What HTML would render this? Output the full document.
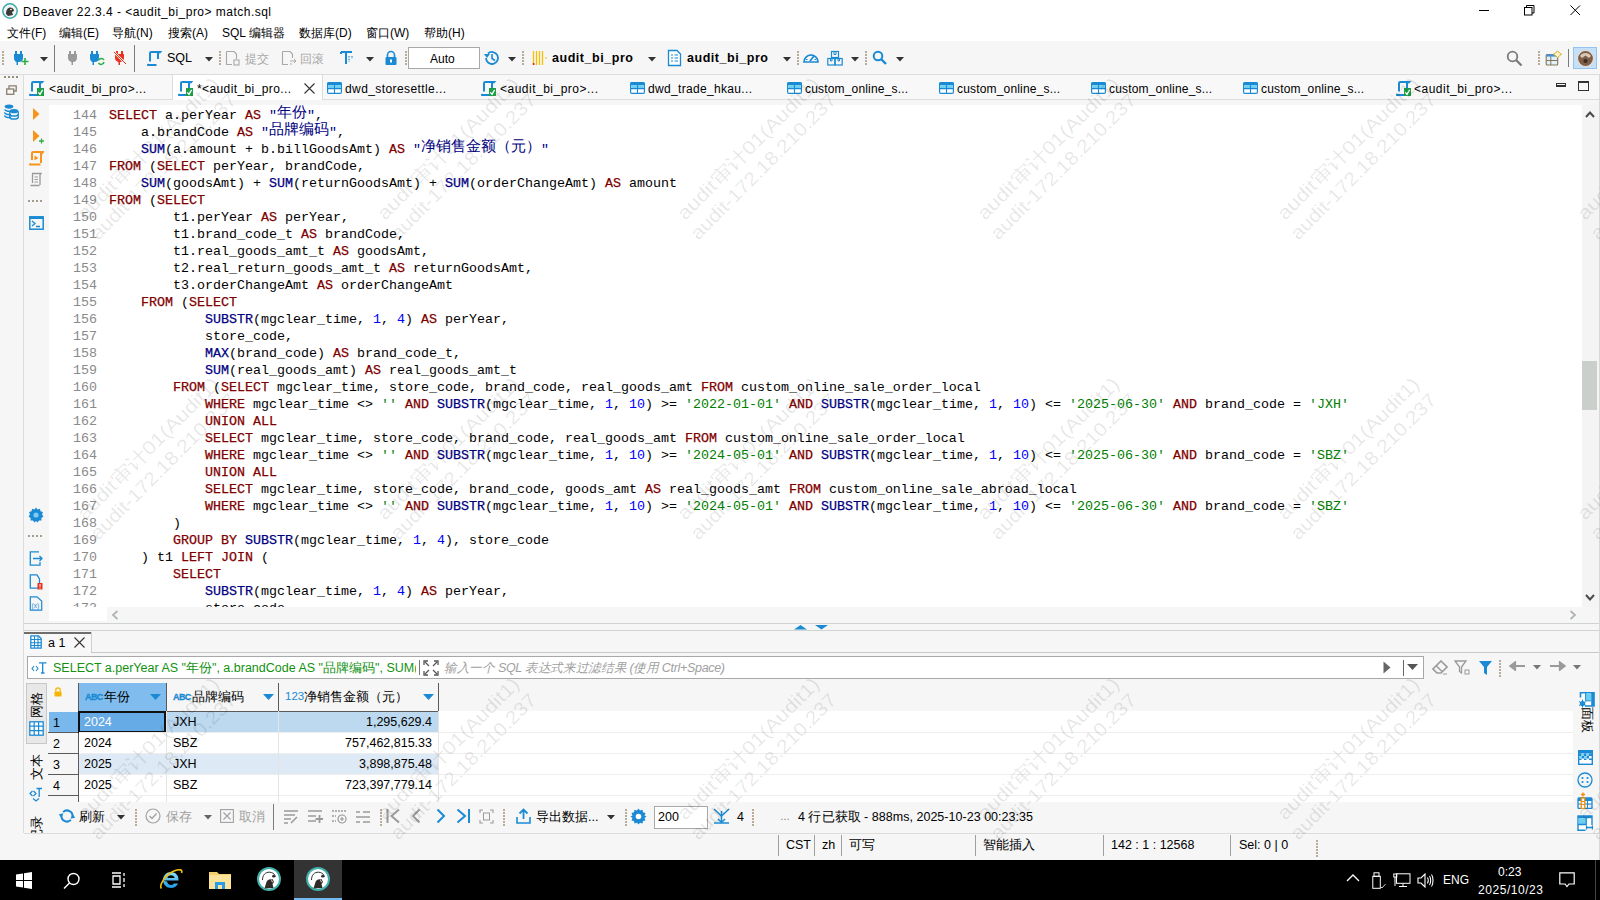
<!DOCTYPE html><html><head><meta charset="utf-8"><style>*{margin:0;padding:0;box-sizing:border-box}
html,body{width:1600px;height:900px;overflow:hidden;background:#f6f6f6;font-family:"Liberation Sans",sans-serif;font-size:12px;color:#000;position:relative}
.a{position:absolute}
.t{white-space:pre;line-height:1}
.vt{writing-mode:vertical-rl;text-orientation:sideways;transform:rotate(180deg);line-height:19px}
i{font-style:normal}
.ln{position:absolute;left:0;width:48px;text-align:right;height:17px;line-height:17px;font-family:"Liberation Mono",monospace;font-size:13.33px;color:#8a8a8a}
.cl{position:absolute;left:60px;white-space:pre;height:17px;line-height:17px;font-family:"Liberation Mono",monospace;font-size:13.33px;color:#000}
.k{color:#800000;-webkit-text-stroke:0.25px #800000}
.f{color:#000080;-webkit-text-stroke:0.25px #000080}
.s{color:#008000}
.q{color:#000080}
.n{color:#0000ff}
.vt2{writing-mode:vertical-rl;text-orientation:sideways;line-height:19px}
.cj{font-family:"Liberation Sans",sans-serif;font-size:15px;position:relative;top:-2px;line-height:0}
</style></head><body><div class="a" style="left:0px;top:0px;width:1600px;height:41px;background:#fff"></div>
<svg class="a" style="left:2px;top:3px;" width="16" height="16" viewBox="0 0 16 16"><circle cx="8" cy="8" r="7.2" fill="#f4f4f4" stroke="#3aa9a6" stroke-width="1.5"/><path d="M4 11C4 8 5 5 8 4.5C10.5 4.5 12 6 12 8L10 9L11 12L6 13Z" fill="#3a3a3a"/><circle cx="9" cy="6.5" r="0.8" fill="#fff"/></svg>
<div class="a t" style="left:23px;top:5.84px;font-size:12px;color:#000;font-weight:normal;;letter-spacing:0.480px">DBeaver 22.3.4 - &lt;audit_bi_pro&gt; match.sql</div>
<div class="a" style="left:1479px;top:10px;width:10px;height:1px;background:#000"></div>
<svg class="a" style="left:1524px;top:5px;" width="12" height="12" viewBox="0 0 12 12"><rect x="0.5" y="2.5" width="7.5" height="7.5" fill="none" stroke="#000"/><path d="M2.5 2.5V0.5H10V8H8" fill="none" stroke="#000"/></svg>
<svg class="a" style="left:1570px;top:5px;" width="12" height="12" viewBox="0 0 12 12"><path d="M0.5 0.5L10 10M10 0.5L0.5 10" stroke="#000" stroke-width="1"/></svg>
<div class="a t" style="left:7px;top:26.84px;font-size:12px;color:#000;font-weight:normal;">文件(F)</div>
<div class="a t" style="left:59px;top:26.84px;font-size:12px;color:#000;font-weight:normal;">编辑(E)</div>
<div class="a t" style="left:112px;top:26.84px;font-size:12px;color:#000;font-weight:normal;">导航(N)</div>
<div class="a t" style="left:168px;top:26.84px;font-size:12px;color:#000;font-weight:normal;">搜索(A)</div>
<div class="a t" style="left:222px;top:26.84px;font-size:12px;color:#000;font-weight:normal;">SQL 编辑器</div>
<div class="a t" style="left:299px;top:26.84px;font-size:12px;color:#000;font-weight:normal;">数据库(D)</div>
<div class="a t" style="left:366px;top:26.84px;font-size:12px;color:#000;font-weight:normal;">窗口(W)</div>
<div class="a t" style="left:424px;top:26.84px;font-size:12px;color:#000;font-weight:normal;">帮助(H)</div>
<div class="a" style="left:0px;top:41px;width:1600px;height:33px;background:#f6f6f6"></div>
<div class="a" style="left:2px;top:51px;width:2px;height:2px;background:#b8ad98"></div>
<div class="a" style="left:2px;top:54px;width:2px;height:2px;background:#b8ad98"></div>
<div class="a" style="left:2px;top:57px;width:2px;height:2px;background:#b8ad98"></div>
<div class="a" style="left:2px;top:60px;width:2px;height:2px;background:#b8ad98"></div>
<div class="a" style="left:2px;top:63px;width:2px;height:2px;background:#b8ad98"></div>
<svg class="a" style="left:13px;top:50px;" width="17" height="16" viewBox="0 0 17 16"><path d="M3 1V4M8 1V4" stroke="#1a8ad4" stroke-width="2"/><path d="M1 4H10V8C10 10.5 8 12 6 12H5V15H3.5V12C2 11.5 1 10 1 8Z" fill="#1a8ad4"/><path d="M12 8V15M8.5 11.5H15.5" stroke="#2cae46" stroke-width="1.6"/></svg>
<svg class="a" style="left:40px;top:57px;" width="8" height="5" viewBox="0 0 8 5"><path d="M0 0H8L4 4.5Z" fill="#333"/></svg>
<div class="a" style="left:54px;top:45px;width:1px;height:27px;background:#7a7a7a"></div>
<svg class="a" style="left:67px;top:50px;" width="12" height="15" viewBox="0 0 12 15"><path d="M3 1V4M8 1V4" stroke="#9a9a9a" stroke-width="2"/><path d="M1 4H10V8C10 10.5 8 12 6.5 12H6V15H4.5V12C2.5 11.5 1 10 1 8Z" fill="#9a9a9a"/></svg>
<svg class="a" style="left:89px;top:50px;" width="17" height="16" viewBox="0 0 17 16"><path d="M3 1V4M8 1V4" stroke="#1a8ad4" stroke-width="2"/><path d="M1 4H10V8C10 10.5 8 12 6 12H5V15H3.5V12C2 11.5 1 10 1 8Z" fill="#1a8ad4"/><path d="M9.5 10.5A3 3 0 0 1 15 10M15 12A3 3 0 0 1 9.5 13" fill="none" stroke="#2cae46" stroke-width="1.5"/></svg>
<svg class="a" style="left:113px;top:50px;" width="14" height="16" viewBox="0 0 14 16"><path d="M4 1V4M9 1V4" stroke="#e8321e" stroke-width="2"/><path d="M2 4H11V8C11 10.5 9 12 7.5 12H7V15H5.5V12C3.5 11.5 2 10 2 8Z" fill="#e8321e"/><path d="M1 2L13 14" stroke="#f6f6f6" stroke-width="2.2"/><path d="M1 2L13 14" stroke="#e8321e" stroke-width="1"/></svg>
<div class="a" style="left:134px;top:45px;width:1px;height:27px;background:#7a7a7a"></div>
<svg class="a" style="left:147px;top:50px;" width="17" height="17" viewBox="0 0 17 17"><path d="M3 11.5V3.2Q3 2 4.2 2H13.2L12.2 3.2" fill="none" stroke="#1a8ad4" stroke-width="2"/><path d="M11 2.5V9" fill="none" stroke="#1a8ad4" stroke-width="2"/><path d="M0.3 14L1 15H9.5" fill="none" stroke="#1a8ad4" stroke-width="2"/></svg>
<div class="a t" style="left:167px;top:52.42px;font-size:12.5px;color:#000;font-weight:normal;">SQL</div>
<svg class="a" style="left:205px;top:57px;" width="8" height="5" viewBox="0 0 8 5"><path d="M0 0H8L4 4.5Z" fill="#333"/></svg>
<div class="a" style="left:219px;top:51px;width:2px;height:2px;background:#b8ad98"></div>
<div class="a" style="left:219px;top:54px;width:2px;height:2px;background:#b8ad98"></div>
<div class="a" style="left:219px;top:57px;width:2px;height:2px;background:#b8ad98"></div>
<div class="a" style="left:219px;top:60px;width:2px;height:2px;background:#b8ad98"></div>
<div class="a" style="left:219px;top:63px;width:2px;height:2px;background:#b8ad98"></div>
<svg class="a" style="left:225px;top:50px;" width="16" height="16" viewBox="0 0 16 16"><path d="M1.5 1.5H9L11.5 4V9M7 14.5H1.5V1.5" fill="none" stroke="#a8a8a8" stroke-width="1.1"/><rect x="9" y="10" width="5" height="5" fill="none" stroke="#a8a8a8" stroke-width="1.1"/></svg>
<div class="a t" style="left:245px;top:52.84px;font-size:12px;color:#a8a8a8;font-weight:normal;">提交</div>
<svg class="a" style="left:281px;top:50px;" width="16" height="16" viewBox="0 0 16 16"><path d="M1.5 1.5H9L11.5 4V8M7 14.5H1.5V1.5" fill="none" stroke="#a8a8a8" stroke-width="1.1"/><path d="M9 11H15M13 9L15 11L13 13M11 14H9" fill="none" stroke="#a8a8a8" stroke-width="1"/></svg>
<div class="a t" style="left:300px;top:52.84px;font-size:12px;color:#a8a8a8;font-weight:normal;">回滚</div>
<svg class="a" style="left:340px;top:50px;" width="16" height="16" viewBox="0 0 16 16"><path d="M1 2H12M6 2V14M1 2V4" stroke="#1a8ad4" stroke-width="2"/><path d="M9 6V12M12 6V9" stroke="#1a8ad4" stroke-width="1.2" stroke-dasharray="1.5 1.2"/></svg>
<svg class="a" style="left:366px;top:57px;" width="8" height="5" viewBox="0 0 8 5"><path d="M0 0H8L4 4.5Z" fill="#333"/></svg>
<svg class="a" style="left:384px;top:50px;" width="14" height="16" viewBox="0 0 14 16"><path d="M3.5 7V5A3.5 3.5 0 0 1 10.5 5V7" fill="none" stroke="#1a8ad4" stroke-width="1.6"/><rect x="1.5" y="7" width="11" height="8" rx="1" fill="#1a8ad4"/><rect x="6" y="9.5" width="2" height="3" fill="#fff"/></svg>
<div class="a" style="left:405px;top:51px;width:2px;height:2px;background:#b8ad98"></div>
<div class="a" style="left:405px;top:54px;width:2px;height:2px;background:#b8ad98"></div>
<div class="a" style="left:405px;top:57px;width:2px;height:2px;background:#b8ad98"></div>
<div class="a" style="left:405px;top:60px;width:2px;height:2px;background:#b8ad98"></div>
<div class="a" style="left:405px;top:63px;width:2px;height:2px;background:#b8ad98"></div>
<div class="a" style="left:408px;top:47px;width:72px;height:22px;background:#fff;border:1px solid #a8a8a8"></div>
<div class="a t" style="left:430px;top:52.84px;font-size:12px;color:#000;font-weight:normal;">Auto</div>
<svg class="a" style="left:483px;top:49px;" width="18" height="18" viewBox="0 0 18 18"><path d="M3 9A6 6 0 1 0 5 4.5" fill="none" stroke="#1a8ad4" stroke-width="1.8"/><path d="M1 5L4 9L7 5Z" fill="#1a8ad4"/><path d="M9 5V9.5L12 11.5" fill="none" stroke="#1a8ad4" stroke-width="1.6"/></svg>
<svg class="a" style="left:508px;top:57px;" width="8" height="5" viewBox="0 0 8 5"><path d="M0 0H8L4 4.5Z" fill="#333"/></svg>
<div class="a" style="left:522px;top:51px;width:2px;height:2px;background:#b8ad98"></div>
<div class="a" style="left:522px;top:54px;width:2px;height:2px;background:#b8ad98"></div>
<div class="a" style="left:522px;top:57px;width:2px;height:2px;background:#b8ad98"></div>
<div class="a" style="left:522px;top:60px;width:2px;height:2px;background:#b8ad98"></div>
<div class="a" style="left:522px;top:63px;width:2px;height:2px;background:#b8ad98"></div>
<svg class="a" style="left:532px;top:50px;" width="16" height="16" viewBox="0 0 16 16"><path d="M1.5 1V15M4.5 1V15M7.5 1V15M10.5 1V15" stroke="#f6c000" stroke-width="1.3"/><rect x="0.8" y="13" width="1.6" height="2" fill="#e02020"/><path d="M13 8H15" stroke="#f6c000" stroke-width="1.2"/></svg>
<div class="a t" style="left:552px;top:52.42px;font-size:12.5px;color:#000;font-weight:bold;;letter-spacing:0.544px">audit_bi_pro</div>
<svg class="a" style="left:648px;top:57px;" width="8" height="5" viewBox="0 0 8 5"><path d="M0 0H8L4 4.5Z" fill="#333"/></svg>
<svg class="a" style="left:667px;top:49px;" width="15" height="18" viewBox="0 0 15 18"><path d="M1.5 1.5H10L13.5 5V16.5H1.5Z" fill="#fff" stroke="#1a8ad4" stroke-width="1.3"/><path d="M4 6H6M7.5 6H11M4 9H6M7.5 9H11M4 12H6M7.5 12H11" stroke="#1a8ad4" stroke-width="1.2"/></svg>
<div class="a t" style="left:687px;top:52.42px;font-size:12.5px;color:#000;font-weight:bold;;letter-spacing:0.544px">audit_bi_pro</div>
<svg class="a" style="left:783px;top:57px;" width="8" height="5" viewBox="0 0 8 5"><path d="M0 0H8L4 4.5Z" fill="#333"/></svg>
<div class="a" style="left:797px;top:51px;width:2px;height:2px;background:#b8ad98"></div>
<div class="a" style="left:797px;top:54px;width:2px;height:2px;background:#b8ad98"></div>
<div class="a" style="left:797px;top:57px;width:2px;height:2px;background:#b8ad98"></div>
<div class="a" style="left:797px;top:60px;width:2px;height:2px;background:#b8ad98"></div>
<div class="a" style="left:797px;top:63px;width:2px;height:2px;background:#b8ad98"></div>
<svg class="a" style="left:802px;top:50px;" width="18" height="16" viewBox="0 0 18 16"><path d="M2 12A7 7 0 1 1 16 12Z" fill="none" stroke="#1a8ad4" stroke-width="1.7"/><path d="M8 11L12 6" stroke="#1a8ad4" stroke-width="1.8"/><path d="M4 9.5H5.5M12.5 9.5H14M9 4.5V6" stroke="#1a8ad4" stroke-width="1.2"/></svg>
<svg class="a" style="left:827px;top:50px;" width="16" height="16" viewBox="0 0 16 16"><rect x="4.5" y="1.5" width="7" height="6" fill="none" stroke="#1a8ad4" stroke-width="1.2"/><rect x="0.8" y="8.5" width="7" height="6.5" fill="none" stroke="#1a8ad4" stroke-width="1.2"/><rect x="8.2" y="8.5" width="7" height="6.5" fill="none" stroke="#1a8ad4" stroke-width="1.2"/><path d="M7 1.5V4.5H9V1.5M3.5 8.5V11H5V8.5M11 8.5V11H12.5V8.5" fill="none" stroke="#1a8ad4"/></svg>
<svg class="a" style="left:851px;top:57px;" width="8" height="5" viewBox="0 0 8 5"><path d="M0 0H8L4 4.5Z" fill="#333"/></svg>
<div class="a" style="left:865px;top:51px;width:2px;height:2px;background:#b8ad98"></div>
<div class="a" style="left:865px;top:54px;width:2px;height:2px;background:#b8ad98"></div>
<div class="a" style="left:865px;top:57px;width:2px;height:2px;background:#b8ad98"></div>
<div class="a" style="left:865px;top:60px;width:2px;height:2px;background:#b8ad98"></div>
<div class="a" style="left:865px;top:63px;width:2px;height:2px;background:#b8ad98"></div>
<svg class="a" style="left:872px;top:50px;" width="16" height="16" viewBox="0 0 16 16"><circle cx="6" cy="6" r="4.3" fill="none" stroke="#1a8ad4" stroke-width="2"/><path d="M9 9L14 14" stroke="#1a8ad4" stroke-width="2.4"/></svg>
<svg class="a" style="left:896px;top:57px;" width="8" height="5" viewBox="0 0 8 5"><path d="M0 0H8L4 4.5Z" fill="#333"/></svg>
<svg class="a" style="left:1506px;top:50px;" width="18" height="18" viewBox="0 0 18 18"><circle cx="6.5" cy="6.5" r="4.8" fill="none" stroke="#7a7a7a" stroke-width="1.8"/><path d="M10 10L15.5 15.5" stroke="#7a7a7a" stroke-width="2.3"/></svg>
<div class="a" style="left:1538px;top:51px;width:2px;height:2px;background:#b8ad98"></div>
<div class="a" style="left:1538px;top:54px;width:2px;height:2px;background:#b8ad98"></div>
<div class="a" style="left:1538px;top:57px;width:2px;height:2px;background:#b8ad98"></div>
<div class="a" style="left:1538px;top:60px;width:2px;height:2px;background:#b8ad98"></div>
<div class="a" style="left:1538px;top:63px;width:2px;height:2px;background:#b8ad98"></div>
<svg class="a" style="left:1545px;top:50px;" width="17" height="16" viewBox="0 0 17 16"><rect x="1.2" y="4.5" width="11.5" height="10.5" rx="1" fill="#dff1fb" stroke="#857556" stroke-width="1.1"/><rect x="1.2" y="4.3" width="10" height="2.3" fill="#4a90d9"/><path d="M1.2 10.5H12.7M5.8 6.5V15" stroke="#857556" stroke-width="1"/><path d="M12.5 0.8L14.5 3L16.5 4.3L14.5 5.6L12.5 7.8L10.5 5.6L8.5 4.3L10.5 3Z" fill="#fff6c8" stroke="#d7aa20" stroke-width="1"/></svg>
<div class="a" style="left:1568px;top:49px;width:1px;height:18px;background:#7a7a7a"></div>
<div class="a" style="left:1573px;top:47px;width:24px;height:22px;background:#c6e0f8;border:1px solid #94c2ee"></div>
<svg class="a" style="left:1576px;top:49px;" width="19" height="19" viewBox="0 0 19 19"><circle cx="9.5" cy="9.5" r="8" fill="#7b5d48"/><circle cx="9.5" cy="9.5" r="8" fill="none" stroke="#e7e0da" stroke-width="1.2"/><path d="M4 7C6 3 13 3 15 7L13 9L9.5 6.5L6 9Z" fill="#d9c8b8"/><circle cx="9.5" cy="12" r="2" fill="#3b2a20"/></svg>
<div class="a" style="left:0px;top:74px;width:1600px;height:1px;background:#dcdcdc"></div>
<div class="a" style="left:0px;top:75px;width:23px;height:785px;background:#f6f6f6"></div>
<div class="a" style="left:23px;top:75px;width:1px;height:758px;background:#dcdcdc"></div>
<div class="a" style="left:24px;top:75px;width:1576px;height:25px;background:#f8f8f8"></div>
<div class="a" style="left:24px;top:99px;width:1576px;height:1px;background:#dcdcdc"></div>
<div class="a" style="left:173px;top:75px;width:149px;height:30px;background:#fff"></div>
<div class="a" style="left:172px;top:75px;width:1px;height:25px;background:#dcdcdc"></div>
<div class="a" style="left:322px;top:75px;width:1px;height:25px;background:#dcdcdc"></div>
<div class="a" style="left:4px;top:76px;width:2px;height:2px;background:#998e7a"></div>
<div class="a" style="left:8px;top:76px;width:2px;height:2px;background:#998e7a"></div>
<div class="a" style="left:12px;top:76px;width:2px;height:2px;background:#998e7a"></div>
<div class="a" style="left:16px;top:76px;width:2px;height:2px;background:#998e7a"></div>
<svg class="a" style="left:6px;top:85px;" width="11" height="10" viewBox="0 0 11 10"><rect x="0.7" y="4" width="7" height="5.3" fill="none" stroke="#8a7f70" stroke-width="1.3"/><path d="M3 4V0.8H10.2V6H7.7" fill="none" stroke="#8a7f70" stroke-width="1.3"/></svg>
<svg class="a" style="left:4px;top:104px;" width="15" height="16" viewBox="0 0 15 16"><ellipse cx="5" cy="2.6" rx="4.3" ry="2.1" fill="#1a8ad4"/><path d="M0.7 5.3A4.3 2.1 0 0 0 7 7M0.7 8.3A4.3 2.1 0 0 0 7 10.3M0.7 11.3A4.3 2.1 0 0 0 7 13.3" fill="none" stroke="#1a8ad4" stroke-width="1.5"/><ellipse cx="10" cy="7.2" rx="4.3" ry="2.1" fill="#1a8ad4"/><path d="M5.7 10A4.3 2.1 0 0 0 14.3 10M5.7 13A4.3 2.1 0 0 0 14.3 13" fill="none" stroke="#1a8ad4" stroke-width="1.5"/><path d="M5.7 7.2V13M14.3 7.2V13" stroke="#1a8ad4" stroke-width="1.2"/></svg>
<svg class="a" style="left:29px;top:80px;" width="17" height="17" viewBox="0 0 17 17"><path d="M3 11.5V3.2Q3 2 4.2 2H13.2L12.2 3.2" fill="none" stroke="#1a8ad4" stroke-width="2"/><path d="M11 2.5V9" fill="none" stroke="#1a8ad4" stroke-width="2"/><path d="M0.3 14L1 15H9.5" fill="none" stroke="#1a8ad4" stroke-width="2"/><rect x="8" y="8" width="7" height="8" fill="#1f9e48"/><path d="M9.3 12.3L11 14.3L13.6 9.8" fill="none" stroke="#fff" stroke-width="1.3"/></svg>
<div class="a t" style="left:49px;top:82.84px;font-size:12px;color:#000;font-weight:normal;;letter-spacing:0.433px">&lt;audit_bi_pro&gt;...</div>
<svg class="a" style="left:178px;top:80px;" width="17" height="17" viewBox="0 0 17 17"><path d="M3 11.5V3.2Q3 2 4.2 2H13.2L12.2 3.2" fill="none" stroke="#1a8ad4" stroke-width="2"/><path d="M11 2.5V9" fill="none" stroke="#1a8ad4" stroke-width="2"/><path d="M0.3 14L1 15H9.5" fill="none" stroke="#1a8ad4" stroke-width="2"/><rect x="8" y="8" width="7" height="8" fill="#1f9e48"/><path d="M9.3 12.3L11 14.3L13.6 9.8" fill="none" stroke="#fff" stroke-width="1.3"/></svg>
<div class="a t" style="left:197px;top:82.84px;font-size:12px;color:#000;font-weight:normal;;letter-spacing:0.392px">*&lt;audit_bi_pro...</div>
<svg class="a" style="left:327px;top:82px;" width="15" height="12" viewBox="0 0 15 12"><rect x="0.6" y="0.6" width="13.8" height="10.8" rx="1.2" fill="#fff" stroke="#1a8ad4" stroke-width="1.2"/><rect x="0.5" y="0.5" width="14" height="2.8" fill="#1a8ad4"/><rect x="1.2" y="3.3" width="12.6" height="2.7" fill="#6ccff0"/><path d="M0.5 6.6H14.5M7.5 3V11" stroke="#1a8ad4" stroke-width="1.1"/></svg>
<div class="a t" style="left:345px;top:82.84px;font-size:12px;color:#000;font-weight:normal;;letter-spacing:0.408px">dwd_storesettle...</div>
<svg class="a" style="left:481px;top:80px;" width="17" height="17" viewBox="0 0 17 17"><path d="M3 11.5V3.2Q3 2 4.2 2H13.2L12.2 3.2" fill="none" stroke="#1a8ad4" stroke-width="2"/><path d="M11 2.5V9" fill="none" stroke="#1a8ad4" stroke-width="2"/><path d="M0.3 14L1 15H9.5" fill="none" stroke="#1a8ad4" stroke-width="2"/><rect x="8" y="8" width="7" height="8" fill="#1f9e48"/><path d="M9.3 12.3L11 14.3L13.6 9.8" fill="none" stroke="#fff" stroke-width="1.3"/></svg>
<div class="a t" style="left:500px;top:82.84px;font-size:12px;color:#000;font-weight:normal;;letter-spacing:0.495px">&lt;audit_bi_pro&gt;...</div>
<svg class="a" style="left:630px;top:82px;" width="15" height="12" viewBox="0 0 15 12"><rect x="0.6" y="0.6" width="13.8" height="10.8" rx="1.2" fill="#fff" stroke="#1a8ad4" stroke-width="1.2"/><rect x="0.5" y="0.5" width="14" height="2.8" fill="#1a8ad4"/><rect x="1.2" y="3.3" width="12.6" height="2.7" fill="#6ccff0"/><path d="M0.5 6.6H14.5M7.5 3V11" stroke="#1a8ad4" stroke-width="1.1"/></svg>
<div class="a t" style="left:648px;top:82.84px;font-size:12px;color:#000;font-weight:normal;;letter-spacing:0.328px">dwd_trade_hkau...</div>
<svg class="a" style="left:787px;top:82px;" width="15" height="12" viewBox="0 0 15 12"><rect x="0.6" y="0.6" width="13.8" height="10.8" rx="1.2" fill="#fff" stroke="#1a8ad4" stroke-width="1.2"/><rect x="0.5" y="0.5" width="14" height="2.8" fill="#1a8ad4"/><rect x="1.2" y="3.3" width="12.6" height="2.7" fill="#6ccff0"/><path d="M0.5 6.6H14.5M7.5 3V11" stroke="#1a8ad4" stroke-width="1.1"/></svg>
<div class="a t" style="left:805px;top:82.84px;font-size:12px;color:#000;font-weight:normal;;letter-spacing:0.173px">custom_online_s...</div>
<svg class="a" style="left:939px;top:82px;" width="15" height="12" viewBox="0 0 15 12"><rect x="0.6" y="0.6" width="13.8" height="10.8" rx="1.2" fill="#fff" stroke="#1a8ad4" stroke-width="1.2"/><rect x="0.5" y="0.5" width="14" height="2.8" fill="#1a8ad4"/><rect x="1.2" y="3.3" width="12.6" height="2.7" fill="#6ccff0"/><path d="M0.5 6.6H14.5M7.5 3V11" stroke="#1a8ad4" stroke-width="1.1"/></svg>
<div class="a t" style="left:957px;top:82.84px;font-size:12px;color:#000;font-weight:normal;;letter-spacing:0.173px">custom_online_s...</div>
<svg class="a" style="left:1091px;top:82px;" width="15" height="12" viewBox="0 0 15 12"><rect x="0.6" y="0.6" width="13.8" height="10.8" rx="1.2" fill="#fff" stroke="#1a8ad4" stroke-width="1.2"/><rect x="0.5" y="0.5" width="14" height="2.8" fill="#1a8ad4"/><rect x="1.2" y="3.3" width="12.6" height="2.7" fill="#6ccff0"/><path d="M0.5 6.6H14.5M7.5 3V11" stroke="#1a8ad4" stroke-width="1.1"/></svg>
<div class="a t" style="left:1109px;top:82.84px;font-size:12px;color:#000;font-weight:normal;;letter-spacing:0.173px">custom_online_s...</div>
<svg class="a" style="left:1243px;top:82px;" width="15" height="12" viewBox="0 0 15 12"><rect x="0.6" y="0.6" width="13.8" height="10.8" rx="1.2" fill="#fff" stroke="#1a8ad4" stroke-width="1.2"/><rect x="0.5" y="0.5" width="14" height="2.8" fill="#1a8ad4"/><rect x="1.2" y="3.3" width="12.6" height="2.7" fill="#6ccff0"/><path d="M0.5 6.6H14.5M7.5 3V11" stroke="#1a8ad4" stroke-width="1.1"/></svg>
<div class="a t" style="left:1261px;top:82.84px;font-size:12px;color:#000;font-weight:normal;;letter-spacing:0.173px">custom_online_s...</div>
<svg class="a" style="left:1396px;top:80px;" width="17" height="17" viewBox="0 0 17 17"><path d="M3 11.5V3.2Q3 2 4.2 2H13.2L12.2 3.2" fill="none" stroke="#1a8ad4" stroke-width="2"/><path d="M11 2.5V9" fill="none" stroke="#1a8ad4" stroke-width="2"/><path d="M0.3 14L1 15H9.5" fill="none" stroke="#1a8ad4" stroke-width="2"/><rect x="8" y="8" width="7" height="8" fill="#1f9e48"/><path d="M9.3 12.3L11 14.3L13.6 9.8" fill="none" stroke="#fff" stroke-width="1.3"/></svg>
<div class="a t" style="left:1414px;top:82.84px;font-size:12px;color:#000;font-weight:normal;;letter-spacing:0.495px">&lt;audit_bi_pro&gt;...</div>
<svg class="a" style="left:304px;top:83px;" width="11" height="11" viewBox="0 0 11 11"><path d="M0.5 0.5L10.5 10.5M10.5 0.5L0.5 10.5" stroke="#333" stroke-width="1.1"/></svg>
<div class="a" style="left:1556px;top:83px;width:10px;height:4px;border:1px solid #333;border-width:1px 1px 2px 1px"></div>
<div class="a" style="left:1578px;top:81px;width:11px;height:10px;border:1px solid #333;border-top-width:2px"></div>
<div class="a" style="left:24px;top:100px;width:1576px;height:521px;background:#f6f6f6"></div>
<svg class="a" style="left:33px;top:108px;" width="8" height="13" viewBox="0 0 8 13"><path d="M0 0L6.5 6L0 12Z" fill="#f7941d"/></svg>
<svg class="a" style="left:33px;top:130px;" width="12" height="14" viewBox="0 0 12 14"><path d="M0 0L6.5 6L0 12Z" fill="#f7941d"/><path d="M8.5 8.5V13.5M6 11H11" stroke="#2cae46" stroke-width="1.3"/></svg>
<svg class="a" style="left:29px;top:150px;" width="15" height="16" viewBox="0 0 15 16"><path d="M3 10V3.2Q3 2 4.2 2H14L13 3.3H12V13" fill="none" stroke="#f7941d" stroke-width="2"/><path d="M0.5 13.5L1.2 14.5H11.5" fill="none" stroke="#f7941d" stroke-width="2"/><path d="M5.5 5.5L9.5 8L5.5 10.5Z" fill="#f7941d"/></svg>
<svg class="a" style="left:30px;top:172px;" width="12" height="15" viewBox="0 0 12 15"><path d="M2 1.5H11L10 3V13M2.5 1.5V11M0.5 13.5H9.5" fill="none" stroke="#9a9a9a" stroke-width="1.3"/><path d="M4.5 5H8M4.5 7.5H8M4.5 10H8" stroke="#9a9a9a" stroke-width="1"/></svg>
<div class="a" style="left:28px;top:200px;width:2px;height:2px;background:#a59c8c"></div>
<div class="a" style="left:32px;top:200px;width:2px;height:2px;background:#a59c8c"></div>
<div class="a" style="left:36px;top:200px;width:2px;height:2px;background:#a59c8c"></div>
<div class="a" style="left:40px;top:200px;width:2px;height:2px;background:#a59c8c"></div>
<svg class="a" style="left:29px;top:216px;" width="15" height="14" viewBox="0 0 15 14"><rect x="0.8" y="0.8" width="13.4" height="12.4" fill="none" stroke="#1a8ad4" stroke-width="1.5"/><rect x="1" y="1" width="13" height="2" fill="#1a8ad4"/><path d="M3 5L6 7.5L3 10M7 10.5H11" fill="none" stroke="#1a8ad4" stroke-width="1.3"/></svg>
<svg class="a" style="left:28px;top:507px;" width="16" height="16" viewBox="0 0 16 16"><path d="M8 0.5L9.5 2.5L12 1.8L12.5 4.3L15 5L14 7.5L15.5 9.5L13.3 11L13.5 13.5L11 13.5L9.5 15.5L8 14L6.5 15.5L5 13.5L2.5 13.5L2.7 11L0.5 9.5L2 7.5L1 5L3.5 4.3L4 1.8L6.5 2.5Z" fill="#1a8ad4"/><circle cx="8" cy="8" r="2.6" fill="#7ccbf0"/></svg>
<div class="a" style="left:28px;top:535px;width:2px;height:2px;background:#a59c8c"></div>
<div class="a" style="left:32px;top:535px;width:2px;height:2px;background:#a59c8c"></div>
<div class="a" style="left:36px;top:535px;width:2px;height:2px;background:#a59c8c"></div>
<div class="a" style="left:40px;top:535px;width:2px;height:2px;background:#a59c8c"></div>
<svg class="a" style="left:29px;top:551px;" width="15" height="15" viewBox="0 0 15 15"><path d="M10 0.8H1.3V14.2H11V11" fill="none" stroke="#1a8ad4" stroke-width="1.3"/><path d="M4 7.5H13M10.5 5L13 7.5L10.5 10" fill="none" stroke="#1a8ad4" stroke-width="1.3"/></svg>
<svg class="a" style="left:29px;top:574px;" width="15" height="16" viewBox="0 0 15 16"><path d="M8 0.8H1.3V14.2H10.5V5L8 0.8Z" fill="none" stroke="#1a8ad4" stroke-width="1.3"/><rect x="8.5" y="9" width="5" height="6.5" fill="#e83020"/><path d="M11 10V12.8M11 13.7V14.7" stroke="#fff" stroke-width="1"/></svg>
<svg class="a" style="left:29px;top:596px;" width="14" height="15" viewBox="0 0 14 15"><path d="M8 0.8H1.3V14.2H12.7V5L8 0.8Z" fill="none" stroke="#1a8ad4" stroke-width="1.2"/><text x="2.5" y="11.5" font-size="6.5" fill="#1a8ad4" font-family="Liberation Sans">(x)</text></svg>
<div class="a" style="left:49px;top:105px;width:1533px;height:502px;background:#fff"></div>
<div class="a" id="code" style="left:49px;top:105px;width:1533px;height:502px;overflow:hidden"><div class="ln" style="top:2px">144</div><div class="cl" style="top:2px"><i class="k">SELECT</i> a.perYear <i class="k">AS</i> <i class="q">&quot;<i class="cj">年份</i>&quot;</i>,</div><div class="ln" style="top:19px">145</div><div class="cl" style="top:19px">    a.brandCode <i class="k">AS</i> <i class="q">&quot;<i class="cj">品牌编码</i>&quot;</i>,</div><div class="ln" style="top:36px">146</div><div class="cl" style="top:36px">    <i class="f">SUM</i>(a.amount + b.billGoodsAmt) <i class="k">AS</i> <i class="q">&quot;<i class="cj">净销售金额（元）</i>&quot;</i></div><div class="ln" style="top:53px">147</div><div class="cl" style="top:53px"><i class="k">FROM</i> (<i class="k">SELECT</i> perYear, brandCode,</div><div class="ln" style="top:70px">148</div><div class="cl" style="top:70px">    <i class="f">SUM</i>(goodsAmt) + <i class="f">SUM</i>(returnGoodsAmt) + <i class="f">SUM</i>(orderChangeAmt) <i class="k">AS</i> amount</div><div class="ln" style="top:87px">149</div><div class="cl" style="top:87px"><i class="k">FROM</i> (<i class="k">SELECT</i></div><div class="ln" style="top:104px">150</div><div class="cl" style="top:104px">        t1.perYear <i class="k">AS</i> perYear,</div><div class="ln" style="top:121px">151</div><div class="cl" style="top:121px">        t1.brand_code_t <i class="k">AS</i> brandCode,</div><div class="ln" style="top:138px">152</div><div class="cl" style="top:138px">        t1.real_goods_amt_t <i class="k">AS</i> goodsAmt,</div><div class="ln" style="top:155px">153</div><div class="cl" style="top:155px">        t2.real_return_goods_amt_t <i class="k">AS</i> returnGoodsAmt,</div><div class="ln" style="top:172px">154</div><div class="cl" style="top:172px">        t3.orderChangeAmt <i class="k">AS</i> orderChangeAmt</div><div class="ln" style="top:189px">155</div><div class="cl" style="top:189px">    <i class="k">FROM</i> (<i class="k">SELECT</i></div><div class="ln" style="top:206px">156</div><div class="cl" style="top:206px">            <i class="f">SUBSTR</i>(mgclear_time, <i class="n">1</i>, <i class="n">4</i>) <i class="k">AS</i> perYear,</div><div class="ln" style="top:223px">157</div><div class="cl" style="top:223px">            store_code,</div><div class="ln" style="top:240px">158</div><div class="cl" style="top:240px">            <i class="f">MAX</i>(brand_code) <i class="k">AS</i> brand_code_t,</div><div class="ln" style="top:257px">159</div><div class="cl" style="top:257px">            <i class="f">SUM</i>(real_goods_amt) <i class="k">AS</i> real_goods_amt_t</div><div class="ln" style="top:274px">160</div><div class="cl" style="top:274px">        <i class="k">FROM</i> (<i class="k">SELECT</i> mgclear_time, store_code, brand_code, real_goods_amt <i class="k">FROM</i> custom_online_sale_order_local</div><div class="ln" style="top:291px">161</div><div class="cl" style="top:291px">            <i class="k">WHERE</i> mgclear_time &lt;&gt; <i class="s">&#x27;&#x27;</i> <i class="k">AND</i> <i class="f">SUBSTR</i>(mgclear_time, <i class="n">1</i>, <i class="n">10</i>) &gt;= <i class="s">&#x27;2022-01-01&#x27;</i> <i class="k">AND</i> <i class="f">SUBSTR</i>(mgclear_time, <i class="n">1</i>, <i class="n">10</i>) &lt;= <i class="s">&#x27;2025-06-30&#x27;</i> <i class="k">AND</i> brand_code = <i class="s">&#x27;JXH&#x27;</i></div><div class="ln" style="top:308px">162</div><div class="cl" style="top:308px">            <i class="k">UNION</i> <i class="k">ALL</i></div><div class="ln" style="top:325px">163</div><div class="cl" style="top:325px">            <i class="k">SELECT</i> mgclear_time, store_code, brand_code, real_goods_amt <i class="k">FROM</i> custom_online_sale_order_local</div><div class="ln" style="top:342px">164</div><div class="cl" style="top:342px">            <i class="k">WHERE</i> mgclear_time &lt;&gt; <i class="s">&#x27;&#x27;</i> <i class="k">AND</i> <i class="f">SUBSTR</i>(mgclear_time, <i class="n">1</i>, <i class="n">10</i>) &gt;= <i class="s">&#x27;2024-05-01&#x27;</i> <i class="k">AND</i> <i class="f">SUBSTR</i>(mgclear_time, <i class="n">1</i>, <i class="n">10</i>) &lt;= <i class="s">&#x27;2025-06-30&#x27;</i> <i class="k">AND</i> brand_code = <i class="s">&#x27;SBZ&#x27;</i></div><div class="ln" style="top:359px">165</div><div class="cl" style="top:359px">            <i class="k">UNION</i> <i class="k">ALL</i></div><div class="ln" style="top:376px">166</div><div class="cl" style="top:376px">            <i class="k">SELECT</i> mgclear_time, store_code, brand_code, goods_amt <i class="k">AS</i> real_goods_amt <i class="k">FROM</i> custom_online_sale_abroad_local</div><div class="ln" style="top:393px">167</div><div class="cl" style="top:393px">            <i class="k">WHERE</i> mgclear_time &lt;&gt; <i class="s">&#x27;&#x27;</i> <i class="k">AND</i> <i class="f">SUBSTR</i>(mgclear_time, <i class="n">1</i>, <i class="n">10</i>) &gt;= <i class="s">&#x27;2024-05-01&#x27;</i> <i class="k">AND</i> <i class="f">SUBSTR</i>(mgclear_time, <i class="n">1</i>, <i class="n">10</i>) &lt;= <i class="s">&#x27;2025-06-30&#x27;</i> <i class="k">AND</i> brand_code = <i class="s">&#x27;SBZ&#x27;</i></div><div class="ln" style="top:410px">168</div><div class="cl" style="top:410px">        )</div><div class="ln" style="top:427px">169</div><div class="cl" style="top:427px">        <i class="k">GROUP</i> <i class="k">BY</i> <i class="f">SUBSTR</i>(mgclear_time, <i class="n">1</i>, <i class="n">4</i>), store_code</div><div class="ln" style="top:444px">170</div><div class="cl" style="top:444px">    ) t1 <i class="k">LEFT</i> <i class="k">JOIN</i> (</div><div class="ln" style="top:461px">171</div><div class="cl" style="top:461px">        <i class="k">SELECT</i></div><div class="ln" style="top:478px">172</div><div class="cl" style="top:478px">            <i class="f">SUBSTR</i>(mgclear_time, <i class="n">1</i>, <i class="n">4</i>) <i class="k">AS</i> perYear,</div><div class="ln" style="top:495px">173</div><div class="cl" style="top:495px">            store_code,</div></div>
<div class="a" style="left:1582px;top:105px;width:17px;height:502px;background:#f4f4f4"></div>
<svg class="a" style="left:1585px;top:110px;" width="10" height="8" viewBox="0 0 10 8"><path d="M1 7L5 2.5L9 7" fill="none" stroke="#4a4a4a" stroke-width="2"/></svg>
<div class="a" style="left:1582px;top:361px;width:15px;height:49px;background:#cbcfcb"></div>
<svg class="a" style="left:1585px;top:594px;" width="10" height="8" viewBox="0 0 10 8"><path d="M1 1L5 5.5L9 1" fill="none" stroke="#4a4a4a" stroke-width="2"/></svg>
<div class="a" style="left:49px;top:607px;width:1533px;height:14px;background:#fff"></div>
<div class="a" style="left:107px;top:607px;width:1475px;height:16px;background:#f6f6f6"></div>
<svg class="a" style="left:111px;top:610px;" width="8" height="10" viewBox="0 0 8 10"><path d="M6.5 1L2 5L6.5 9" fill="none" stroke="#b0b6b0" stroke-width="1.8"/></svg>
<svg class="a" style="left:1569px;top:610px;" width="8" height="10" viewBox="0 0 8 10"><path d="M1.5 1L6 5L1.5 9" fill="none" stroke="#b0b6b0" stroke-width="1.8"/></svg>
<div class="a" style="left:24px;top:623px;width:1575px;height:210px;background:#f6f6f6"></div>
<div class="a" style="left:24px;top:623px;width:1575px;height:1px;background:#d0d4d0"></div>
<div class="a" style="left:24px;top:630px;width:1575px;height:1px;background:#d0d4d0"></div>
<svg class="a" style="left:794px;top:625px;" width="13" height="5" viewBox="0 0 13 5"><path d="M0 4.5L6.5 0L13 4.5Z" fill="#1a8ad4"/></svg>
<svg class="a" style="left:815px;top:625px;" width="13" height="5" viewBox="0 0 13 5"><path d="M0 0H13L6.5 4.5Z" fill="#1a8ad4"/></svg>
<div class="a" style="left:24px;top:632px;width:67px;height:21px;background:#f8f8f8"></div>
<div class="a" style="left:24px;top:632px;width:67px;height:2px;background:#6e6e6e"></div>
<div class="a" style="left:91px;top:632px;width:1px;height:21px;background:#d0d0d0"></div>
<div class="a" style="left:91px;top:652px;width:1509px;height:1px;background:#c8c8c8"></div>
<svg class="a" style="left:30px;top:635px;" width="12" height="14" viewBox="0 0 12 14"><path d="M0.8 0.8H8.5L11.2 3.5V13.2H0.8Z" fill="#fff" stroke="#1a8ad4" stroke-width="1.3"/><path d="M1 4.5H11M1 7.7H11M1 10.5H11M4.5 1V13M8 1V13" stroke="#1a8ad4" stroke-width="1.1"/></svg>
<div class="a t" style="left:48px;top:637.42px;font-size:12.5px;color:#000;font-weight:normal;">a 1</div>
<svg class="a" style="left:74px;top:637px;" width="11" height="11" viewBox="0 0 11 11"><path d="M0.5 0.5L10.5 10.5M10.5 0.5L0.5 10.5" stroke="#333" stroke-width="1.1"/></svg>
<div class="a" style="left:27px;top:656px;width:1397px;height:23px;background:#fff;border:1px solid #a8a8a8"></div>
<svg class="a" style="left:31px;top:661px;" width="16" height="13" viewBox="0 0 16 13"><path d="M3 5L1 7.5L3 10M5 5L7 7.5L5 10" fill="none" stroke="#1a8ad4" stroke-width="1.1"/><path d="M8 1.8H15.5M11.7 1.8V12M10 12H13.5" fill="none" stroke="#1a8ad4" stroke-width="1.3"/></svg>
<div class="a" style="left:50px;top:658px;width:366px;height:19px;overflow:hidden">
<div class="a t" style="left:3px;top:4.42px;font-size:12.5px;color:#11920f;font-weight:normal;">SELECT a.perYear AS &quot;年份&quot;, a.brandCode AS &quot;品牌编码&quot;, SUM(</div>
</div>
<div class="a" style="left:419px;top:660px;width:1px;height:15px;background:#777"></div>
<svg class="a" style="left:423px;top:660px;" width="16" height="16" viewBox="0 0 16 16"><path d="M1 5V1H5M11 1H15V5M15 11V15H11M5 15H1V11" fill="none" stroke="#555" stroke-width="1.3"/><path d="M2 2L6 6M14 2L10 6M14 14L10 10M2 14L6 10" stroke="#555" stroke-width="1.2"/></svg>
<div class="a t" style="left:444px;top:662.42px;font-size:12.5px;color:#a0a0a0;font-weight:normal;font-style:italic;letter-spacing:-0.318px">输入一个 SQL 表达式来过滤结果 (使用 Ctrl+Space)</div>
<svg class="a" style="left:1383px;top:661px;" width="8" height="13" viewBox="0 0 8 13"><path d="M0.5 0.5L7.5 6.5L0.5 12.5Z" fill="#666"/></svg>
<div class="a" style="left:1403px;top:660px;width:1px;height:16px;background:#666"></div>
<svg class="a" style="left:1407px;top:664px;" width="11" height="7" viewBox="0 0 11 7"><path d="M0 0H11L5.5 6Z" fill="#555"/></svg>
<svg class="a" style="left:1432px;top:660px;" width="16" height="15" viewBox="0 0 16 15"><path d="M9 1L15 7L9 13H5L1 9Z" fill="none" stroke="#9a9a9a" stroke-width="1.6"/><path d="M4.5 6L10 11.5" stroke="#9a9a9a" stroke-width="1.4"/><path d="M11 14H15" stroke="#9a9a9a"/></svg>
<svg class="a" style="left:1454px;top:660px;" width="16" height="16" viewBox="0 0 16 16"><path d="M1 1H12L7.5 7V13L5.5 11.5V7Z" fill="none" stroke="#9a9a9a" stroke-width="1.3"/><rect x="11" y="10" width="4" height="4" fill="none" stroke="#9a9a9a"/></svg>
<svg class="a" style="left:1478px;top:660px;" width="15" height="16" viewBox="0 0 15 16"><path d="M1 1H14L9 7V15L6 13V7Z" fill="#1a8ad4"/></svg>
<div class="a" style="left:1499px;top:660px;width:2px;height:2px;background:#b8ad98"></div>
<div class="a" style="left:1499px;top:663px;width:2px;height:2px;background:#b8ad98"></div>
<div class="a" style="left:1499px;top:666px;width:2px;height:2px;background:#b8ad98"></div>
<div class="a" style="left:1499px;top:669px;width:2px;height:2px;background:#b8ad98"></div>
<div class="a" style="left:1499px;top:672px;width:2px;height:2px;background:#b8ad98"></div>
<div class="a" style="left:1499px;top:675px;width:2px;height:2px;background:#b8ad98"></div>
<svg class="a" style="left:1509px;top:661px;" width="17" height="10" viewBox="0 0 17 10"><path d="M16 5H6M6 1.5L1.5 5L6 8.5Z" stroke="#9a9a9a" stroke-width="2.2" fill="#9a9a9a"/></svg>
<svg class="a" style="left:1533px;top:665px;" width="8" height="5" viewBox="0 0 8 5"><path d="M0 0H8L4 4.5Z" fill="#777"/></svg>
<svg class="a" style="left:1549px;top:661px;" width="17" height="10" viewBox="0 0 17 10"><path d="M1 5H11M11 1.5L15.5 5L11 8.5Z" stroke="#9a9a9a" stroke-width="2.2" fill="#9a9a9a"/></svg>
<svg class="a" style="left:1573px;top:665px;" width="8" height="5" viewBox="0 0 8 5"><path d="M0 0H8L4 4.5Z" fill="#777"/></svg>
<div class="a" style="left:26px;top:683px;width:21px;height:61px;background:#e8e8e8;border:1px solid #c8c8c8"></div>
<div class="a t vt" style="left:28px;top:693px;width:19px;height:25px;font-size:12.5px">网格</div>
<svg class="a" style="left:29px;top:721px;" width="15" height="15" viewBox="0 0 15 15"><rect x="0.8" y="0.8" width="13.4" height="13.4" fill="#fff" stroke="#1a8ad4" stroke-width="1.3"/><path d="M1 5.2H14M1 9.6H14M5.2 1V14M9.6 1V14" stroke="#1a8ad4" stroke-width="1.2"/></svg>
<div class="a t vt" style="left:28px;top:755px;width:19px;height:25px;font-size:12.5px">文本</div>
<svg class="a" style="left:29px;top:787px;" width="14" height="15" viewBox="0 0 14 15"><path d="M3.5 4L1 6.5L3.5 9M4.5 4L7 6.5L4.5 9" fill="none" stroke="#1a8ad4" stroke-width="1.2"/><path d="M7.5 1.5H13M10.2 1.5V10" fill="none" stroke="#1a8ad4" stroke-width="1.3"/><path d="M4 11.5L7 14L10 11.5" fill="none" stroke="#1a8ad4" stroke-width="1.2"/></svg>
<div class="a" style="left:24px;top:814px;width:23px;height:19px;overflow:hidden"><div class="a t vt" style="left:4px;top:3px;width:19px;height:25px;font-size:12.5px">记录</div></div>
<div class="a" style="left:48px;top:683px;width:1525px;height:119px;background:#fff"></div>
<div class="a" style="left:48px;top:683px;width:1525px;height:28px;background:#f6f6f6"></div>
<div class="a" style="left:48px;top:711px;width:390px;height:1px;background:#5a5a5a"></div>
<div class="a" style="left:48px;top:711px;width:30px;height:91px;background:#f6f6f6"></div>
<div class="a" style="left:78px;top:683px;width:1px;height:119px;background:#5a5a5a"></div>
<svg class="a" style="left:54px;top:687px;" width="8" height="10" viewBox="0 0 8 10"><path d="M1.8 4.5V3A2.2 2.2 0 0 1 6.2 3V4.5" fill="none" stroke="#f5b400" stroke-width="1.3"/><rect x="0.5" y="4.5" width="7" height="5" rx=".8" fill="#f5b400"/></svg>
<div class="a" style="left:79px;top:683px;width:87px;height:28px;background:#80bdee"></div>
<div class="a" style="left:166px;top:683px;width:1px;height:28px;background:#5a5a5a"></div>
<div class="a" style="left:278px;top:683px;width:1px;height:28px;background:#5a5a5a"></div>
<div class="a" style="left:438px;top:683px;width:1px;height:28px;background:#5a5a5a"></div>
<div class="a t" style="left:85px;top:693.38px;font-size:9px;color:#1a8ad4;font-weight:bold;letter-spacing:-0.6px;-webkit-text-stroke:0.3px #1a8ad4">ABC</div>
<div class="a t" style="left:104px;top:691.42px;font-size:12.5px;color:#000;font-weight:normal;">年份</div>
<svg class="a" style="left:150px;top:694px;" width="11" height="6" viewBox="0 0 11 6"><path d="M0 0H11L5.5 6Z" fill="#1a8ad4"/></svg>
<div class="a t" style="left:173px;top:693.38px;font-size:9px;color:#1a8ad4;font-weight:bold;letter-spacing:-0.6px;-webkit-text-stroke:0.3px #1a8ad4">ABC</div>
<div class="a t" style="left:192px;top:691.42px;font-size:12.5px;color:#000;font-weight:normal;">品牌编码</div>
<svg class="a" style="left:263px;top:694px;" width="11" height="6" viewBox="0 0 11 6"><path d="M0 0H11L5.5 6Z" fill="#1a8ad4"/></svg>
<div class="a t" style="left:285px;top:691.27px;font-size:11.5px;color:#1a8ad4;font-weight:normal;">123</div>
<div class="a t" style="left:304px;top:691.42px;font-size:12.5px;color:#000;font-weight:normal;">净销售金额（元）</div>
<svg class="a" style="left:423px;top:694px;" width="11" height="6" viewBox="0 0 11 6"><path d="M0 0H11L5.5 6Z" fill="#1a8ad4"/></svg>
<div class="a" style="left:49px;top:712px;width:29px;height:21px;background:#78b8ec"></div>
<div class="a" style="left:79px;top:712px;width:359px;height:21px;background:#bcd9f0"></div>
<div class="a" style="left:78px;top:711px;width:88px;height:22px;background:#66aae6;border:2px solid #111"></div>
<div class="a" style="left:48px;top:732px;width:30px;height:1px;background:#5a5a5a"></div>
<div class="a" style="left:79px;top:732px;width:1494px;height:1px;background:#eeeeee"></div>
<div class="a t" style="left:53px;top:717.42px;font-size:12.5px;color:#000;font-weight:normal;">1</div>
<div class="a t" style="left:84px;top:716.42px;font-size:12.5px;color:#fff;font-weight:normal;">2024</div>
<div class="a t" style="left:173px;top:716.42px;font-size:12.5px;color:#000;font-weight:normal;">JXH</div>
<div class="a t" style="right:1168px;top:716.42px;font-size:12.5px;color:#000;font-weight:normal;">1,295,629.4</div>
<div class="a" style="left:48px;top:753px;width:30px;height:1px;background:#5a5a5a"></div>
<div class="a" style="left:79px;top:753px;width:1494px;height:1px;background:#eeeeee"></div>
<div class="a t" style="left:53px;top:738.42px;font-size:12.5px;color:#000;font-weight:normal;">2</div>
<div class="a t" style="left:84px;top:737.42px;font-size:12.5px;color:#000;font-weight:normal;">2024</div>
<div class="a t" style="left:173px;top:737.42px;font-size:12.5px;color:#000;font-weight:normal;">SBZ</div>
<div class="a t" style="right:1168px;top:737.42px;font-size:12.5px;color:#000;font-weight:normal;">757,462,815.33</div>
<div class="a" style="left:79px;top:754px;width:359px;height:21px;background:#dde9f5"></div>
<div class="a" style="left:48px;top:774px;width:30px;height:1px;background:#5a5a5a"></div>
<div class="a" style="left:79px;top:774px;width:1494px;height:1px;background:#eeeeee"></div>
<div class="a t" style="left:53px;top:759.42px;font-size:12.5px;color:#000;font-weight:normal;">3</div>
<div class="a t" style="left:84px;top:758.42px;font-size:12.5px;color:#000;font-weight:normal;">2025</div>
<div class="a t" style="left:173px;top:758.42px;font-size:12.5px;color:#000;font-weight:normal;">JXH</div>
<div class="a t" style="right:1168px;top:758.42px;font-size:12.5px;color:#000;font-weight:normal;">3,898,875.48</div>
<div class="a" style="left:48px;top:795px;width:30px;height:1px;background:#5a5a5a"></div>
<div class="a" style="left:79px;top:795px;width:1494px;height:1px;background:#eeeeee"></div>
<div class="a t" style="left:53px;top:780.42px;font-size:12.5px;color:#000;font-weight:normal;">4</div>
<div class="a t" style="left:84px;top:779.42px;font-size:12.5px;color:#000;font-weight:normal;">2025</div>
<div class="a t" style="left:173px;top:779.42px;font-size:12.5px;color:#000;font-weight:normal;">SBZ</div>
<div class="a t" style="right:1168px;top:779.42px;font-size:12.5px;color:#000;font-weight:normal;">723,397,779.14</div>
<div class="a" style="left:166px;top:711px;width:1px;height:91px;background:#e4e4e4"></div>
<div class="a" style="left:278px;top:711px;width:1px;height:91px;background:#e4e4e4"></div>
<div class="a" style="left:438px;top:711px;width:1px;height:91px;background:#e4e4e4"></div>
<div class="a" style="left:1573px;top:683px;width:27px;height:150px;background:#f6f6f6"></div>
<svg class="a" style="left:1578px;top:690px;" width="18" height="18" viewBox="0 0 18 18"><path d="M2.5 7.5V2.8H16V16H7" fill="#fff" stroke="#1a8ad4" stroke-width="1.6"/><rect x="8" y="3.5" width="5" height="7" fill="#6ccff0"/><path d="M7.6 2.8V10.8H13.2" fill="none" stroke="#1a8ad4" stroke-width="1"/><rect x="13.2" y="3" width="2.8" height="13" fill="#1a8ad4"/><circle cx="4.5" cy="13.5" r="2.6" fill="#1a8ad4"/><circle cx="4.5" cy="13.5" r="0.9" fill="#fff"/><path d="M4.5 9.5V17.5M1 11.5L8 15.5M1 15.5L8 11.5" stroke="#1a8ad4" stroke-width="1"/></svg>
<div class="a t vt2" style="left:1577px;top:707px;width:19px;height:25px;font-size:12.5px">面板</div>
<svg class="a" style="left:1578px;top:750px;" width="15" height="15" viewBox="0 0 15 15"><rect x="0.7" y="0.7" width="13.6" height="13.6" fill="#fff" stroke="#1a8ad4" stroke-width="1.4"/><rect x="1" y="1" width="13" height="2.5" fill="#1a8ad4"/><path d="M1 3.5H3.5V6H1ZM6 3.5H8.5V6H6ZM11 3.5H14V6H11ZM3.5 6H6V8.5H3.5ZM8.5 6H11V8.5H8.5ZM1 8.5H3.5V10H1ZM6 8.5H8.5V10H6ZM11 8.5H14V10H11Z" fill="#1a8ad4"/><path d="M3.5 3.5H6V6H3.5ZM8.5 3.5H11V6H8.5ZM1 6H3.5V8.5H1ZM6 6H8.5V8.5H6Z" fill="#7fd0f2"/></svg>
<svg class="a" style="left:1577px;top:772px;" width="16" height="16" viewBox="0 0 16 16"><circle cx="8" cy="8" r="7" fill="none" stroke="#1a8ad4" stroke-width="1.3"/><circle cx="5.5" cy="6" r="1.1" fill="#1a8ad4"/><circle cx="10.5" cy="6" r="1.1" fill="#1a8ad4"/><circle cx="5.5" cy="10" r="1.1" fill="#1a8ad4"/><circle cx="10.5" cy="10" r="1.1" fill="#1a8ad4"/></svg>
<svg class="a" style="left:1577px;top:792px;" width="16" height="17" viewBox="0 0 16 17"><rect x="1" y="6" width="14" height="10.5" rx="1" fill="#fff" stroke="#1a8ad4" stroke-width="1.3"/><rect x="1" y="6" width="14" height="3" fill="#1a8ad4"/><path d="M1 12H15M10.5 6V16.5" stroke="#1a8ad4" stroke-width="1.2"/><rect x="4.2" y="6" width="3.6" height="10.8" fill="#f6f6f6" stroke="#f08c00" stroke-width="1.3"/><path d="M4.5 9.5H7.5M4.5 12.5H7.5" stroke="#f08c00" stroke-width="1"/><path d="M6 0.5V4.5M4 2.5H8" stroke="#f08c00" stroke-width="1.3"/></svg>
<svg class="a" style="left:1577px;top:815px;" width="16" height="16" viewBox="0 0 16 16"><path d="M8.5 15.3H1V1H15V10" fill="#fff" stroke="#1a8ad4" stroke-width="1.4"/><rect x="1" y="1" width="14" height="2.2" fill="#1a8ad4"/><rect x="1.5" y="3.2" width="7.5" height="6" fill="#6ccff0"/><path d="M1 9.5H9.2V3" fill="none" stroke="#1a8ad4" stroke-width="1.3"/><path d="M9.5 12.5H15.5M9.5 10.5V14.5M15.5 10.5V14.5" stroke="#1a8ad4" stroke-width="1.3"/></svg>
<svg class="a" style="left:59px;top:808px;" width="16" height="16" viewBox="0 0 16 16"><g transform="rotate(45 8 8)"><path d="M2.5 8A5.5 5.5 0 0 1 12.5 4.8" fill="none" stroke="#1a8ad4" stroke-width="2"/><path d="M13.5 8A5.5 5.5 0 0 1 3.5 11.2" fill="none" stroke="#1a8ad4" stroke-width="2"/><path d="M10.5 2.5L15 3.5L12.5 7.5Z M5.5 13.5L1 12.5L3.5 8.5Z" fill="#1a8ad4"/></g></svg>
<div class="a t" style="left:79px;top:811.42px;font-size:12.5px;color:#000;font-weight:normal;">刷新</div>
<svg class="a" style="left:117px;top:815px;" width="8" height="5" viewBox="0 0 8 5"><path d="M0 0H8L4 4.5Z" fill="#333"/></svg>
<div class="a" style="left:135px;top:809px;width:2px;height:2px;background:#b8ad98"></div>
<div class="a" style="left:135px;top:812px;width:2px;height:2px;background:#b8ad98"></div>
<div class="a" style="left:135px;top:815px;width:2px;height:2px;background:#b8ad98"></div>
<div class="a" style="left:135px;top:818px;width:2px;height:2px;background:#b8ad98"></div>
<div class="a" style="left:135px;top:821px;width:2px;height:2px;background:#b8ad98"></div>
<div class="a" style="left:135px;top:824px;width:2px;height:2px;background:#b8ad98"></div>
<svg class="a" style="left:145px;top:808px;" width="16" height="16" viewBox="0 0 16 16"><circle cx="8" cy="8" r="7" fill="none" stroke="#a0a0a0" stroke-width="1.2"/><path d="M4.5 8L7 10.5L11.5 5.5" fill="none" stroke="#a0a0a0" stroke-width="1.3"/></svg>
<div class="a t" style="left:166px;top:811.42px;font-size:12.5px;color:#a0a0a0;font-weight:normal;">保存</div>
<svg class="a" style="left:204px;top:815px;" width="8" height="5" viewBox="0 0 8 5"><path d="M0 0H8L4 4.5Z" fill="#666"/></svg>
<svg class="a" style="left:220px;top:809px;" width="14" height="14" viewBox="0 0 14 14"><rect x="0.6" y="0.6" width="12.8" height="12.8" fill="none" stroke="#a0a0a0" stroke-width="1.1"/><path d="M3.5 3.5L10.5 10.5M10.5 3.5L3.5 10.5" stroke="#a0a0a0" stroke-width="1.1"/></svg>
<div class="a t" style="left:239px;top:811.42px;font-size:12.5px;color:#a0a0a0;font-weight:normal;">取消</div>
<div class="a" style="left:273px;top:804px;width:1px;height:26px;background:#7a7a7a"></div>
<svg class="a" style="left:283px;top:809px;" width="16" height="15" viewBox="0 0 16 15"><path d="M1 2H15M1 6H12M1 10H8M1 14H5" stroke="#9a9a9a" stroke-width="1.6"/><path d="M8 14L14 8" stroke="#9a9a9a" stroke-width="1.6"/></svg>
<svg class="a" style="left:307px;top:809px;" width="16" height="15" viewBox="0 0 16 15"><path d="M1 2H15M1 7H9M1 12H9" stroke="#9a9a9a" stroke-width="1.6"/><path d="M12.5 6V14M8.5 10H16" stroke="#9a9a9a" stroke-width="1.8"/></svg>
<svg class="a" style="left:331px;top:809px;" width="16" height="15" viewBox="0 0 16 15"><path d="M1 2H15M1 7H5M1 12H5" stroke="#9a9a9a" stroke-width="1.6" stroke-dasharray="2 1"/><circle cx="11" cy="10" r="4" fill="none" stroke="#9a9a9a" stroke-width="1.2"/><path d="M11 8V12M9 10H13" stroke="#9a9a9a" stroke-width="1.2"/></svg>
<svg class="a" style="left:355px;top:809px;" width="16" height="15" viewBox="0 0 16 15"><path d="M1 3H5M8 3H15M1 8H15M1 13H5M8 13H15" stroke="#9a9a9a" stroke-width="1.6"/></svg>
<div class="a" style="left:380px;top:809px;width:2px;height:2px;background:#b8ad98"></div>
<div class="a" style="left:380px;top:812px;width:2px;height:2px;background:#b8ad98"></div>
<div class="a" style="left:380px;top:815px;width:2px;height:2px;background:#b8ad98"></div>
<div class="a" style="left:380px;top:818px;width:2px;height:2px;background:#b8ad98"></div>
<div class="a" style="left:380px;top:821px;width:2px;height:2px;background:#b8ad98"></div>
<div class="a" style="left:380px;top:824px;width:2px;height:2px;background:#b8ad98"></div>
<svg class="a" style="left:386px;top:808px;" width="15" height="16" viewBox="0 0 15 16"><path d="M1.5 1V15" stroke="#9a9a9a" stroke-width="2"/><path d="M13 1.5L5.5 8L13 14.5" fill="none" stroke="#9a9a9a" stroke-width="2"/></svg>
<svg class="a" style="left:411px;top:808px;" width="10" height="16" viewBox="0 0 10 16"><path d="M8.5 1.5L2 8L8.5 14.5" fill="none" stroke="#9a9a9a" stroke-width="2"/></svg>
<svg class="a" style="left:436px;top:808px;" width="10" height="16" viewBox="0 0 10 16"><path d="M1.5 1.5L8 8L1.5 14.5" fill="none" stroke="#1a8ad4" stroke-width="2"/></svg>
<svg class="a" style="left:456px;top:808px;" width="15" height="16" viewBox="0 0 15 16"><path d="M1.5 1.5L9 8L1.5 14.5" fill="none" stroke="#1a8ad4" stroke-width="2"/><path d="M13 1V15" stroke="#1a8ad4" stroke-width="2"/></svg>
<svg class="a" style="left:479px;top:809px;" width="15" height="15" viewBox="0 0 15 15"><path d="M1 4V1H4M11 1H14V4M14 11V14H11M4 14H1V11" fill="none" stroke="#9a9a9a" stroke-width="1.1"/><rect x="4.5" y="4" width="6" height="7" fill="none" stroke="#9a9a9a"/></svg>
<div class="a" style="left:503px;top:809px;width:2px;height:2px;background:#b8ad98"></div>
<div class="a" style="left:503px;top:812px;width:2px;height:2px;background:#b8ad98"></div>
<div class="a" style="left:503px;top:815px;width:2px;height:2px;background:#b8ad98"></div>
<div class="a" style="left:503px;top:818px;width:2px;height:2px;background:#b8ad98"></div>
<div class="a" style="left:503px;top:821px;width:2px;height:2px;background:#b8ad98"></div>
<div class="a" style="left:503px;top:824px;width:2px;height:2px;background:#b8ad98"></div>
<svg class="a" style="left:516px;top:808px;" width="15" height="16" viewBox="0 0 15 16"><path d="M7.5 11V2M3.5 5.5L7.5 1.5L11.5 5.5" fill="none" stroke="#1a8ad4" stroke-width="1.8"/><path d="M1 9V15H14V9" fill="none" stroke="#1a8ad4" stroke-width="1.6"/></svg>
<div class="a t" style="left:536px;top:811.42px;font-size:12.5px;color:#000;font-weight:normal;">导出数据...</div>
<svg class="a" style="left:607px;top:815px;" width="8" height="5" viewBox="0 0 8 5"><path d="M0 0H8L4 4.5Z" fill="#333"/></svg>
<div class="a" style="left:625px;top:809px;width:2px;height:2px;background:#b8ad98"></div>
<div class="a" style="left:625px;top:812px;width:2px;height:2px;background:#b8ad98"></div>
<div class="a" style="left:625px;top:815px;width:2px;height:2px;background:#b8ad98"></div>
<div class="a" style="left:625px;top:818px;width:2px;height:2px;background:#b8ad98"></div>
<div class="a" style="left:625px;top:821px;width:2px;height:2px;background:#b8ad98"></div>
<div class="a" style="left:625px;top:824px;width:2px;height:2px;background:#b8ad98"></div>
<svg class="a" style="left:630px;top:808px;" width="17" height="17" viewBox="0 0 17 17"><path d="M8.5 0.5L10 2.5L12.5 1.8L13 4.3L15.5 5L14.5 7.5L16.5 8.5L14.5 10L15.5 12.5L13 13L12.5 15.5L10 14.8L8.5 16.5L7 14.8L4.5 15.5L4 13L1.5 12.5L2.5 10L0.5 8.5L2.5 7.5L1.5 5L4 4.3L4.5 1.8L7 2.5Z" fill="#1a8ad4"/><circle cx="8.5" cy="8.5" r="2.8" fill="#fff"/></svg>
<div class="a" style="left:654px;top:806px;width:54px;height:23px;background:#fff;border:1px solid #a8a8a8"></div>
<div class="a t" style="left:658px;top:811.42px;font-size:12.5px;color:#000;font-weight:normal;">200</div>
<svg class="a" style="left:713px;top:808px;" width="17" height="16" viewBox="0 0 17 16"><path d="M1 1L8.5 8L16 1" fill="none" stroke="#1a8ad4" stroke-width="1.5"/><path d="M8.5 3V14M5 11L8.5 14.5L12 11" fill="none" stroke="#1a8ad4" stroke-width="1.5"/><path d="M1 15H16" stroke="#1a8ad4" stroke-width="1.5"/></svg>
<div class="a t" style="left:737px;top:811.42px;font-size:12.5px;color:#000;font-weight:normal;">4</div>
<div class="a" style="left:752px;top:809px;width:2px;height:2px;background:#b8ad98"></div>
<div class="a" style="left:752px;top:812px;width:2px;height:2px;background:#b8ad98"></div>
<div class="a" style="left:752px;top:815px;width:2px;height:2px;background:#b8ad98"></div>
<div class="a" style="left:752px;top:818px;width:2px;height:2px;background:#b8ad98"></div>
<div class="a" style="left:752px;top:821px;width:2px;height:2px;background:#b8ad98"></div>
<div class="a" style="left:752px;top:824px;width:2px;height:2px;background:#b8ad98"></div>
<div class="a t" style="left:780px;top:811.53px;font-size:10px;color:#777;font-weight:normal;">…</div>
<div class="a t" style="left:798px;top:811.42px;font-size:12.5px;color:#000;font-weight:normal;;letter-spacing:0.027px">4 行已获取 - 888ms, 2025-10-23 00:23:35</div>
<div class="a" style="left:24px;top:833px;width:1576px;height:1px;background:#dcdcdc"></div>
<div class="a" style="left:0px;top:834px;width:1600px;height:26px;background:#f6f6f6"></div>
<div class="a" style="left:778px;top:835px;width:1px;height:21px;background:#a0a0a0"></div>
<div class="a" style="left:814px;top:835px;width:1px;height:21px;background:#a0a0a0"></div>
<div class="a" style="left:841px;top:835px;width:1px;height:21px;background:#a0a0a0"></div>
<div class="a" style="left:975px;top:835px;width:1px;height:21px;background:#a0a0a0"></div>
<div class="a" style="left:1103px;top:835px;width:1px;height:21px;background:#a0a0a0"></div>
<div class="a" style="left:1230px;top:835px;width:1px;height:21px;background:#a0a0a0"></div>
<div class="a t" style="left:786px;top:839.42px;font-size:12.5px;color:#000;font-weight:normal;">CST</div>
<div class="a t" style="left:822px;top:839.42px;font-size:12.5px;color:#000;font-weight:normal;">zh</div>
<div class="a t" style="left:849px;top:839.42px;font-size:12.5px;color:#000;font-weight:normal;">可写</div>
<div class="a t" style="left:983px;top:839.42px;font-size:12.5px;color:#000;font-weight:normal;">智能插入</div>
<div class="a t" style="left:1111px;top:839.42px;font-size:12.5px;color:#000;font-weight:normal;">142 : 1 : 12568</div>
<div class="a t" style="left:1239px;top:839.42px;font-size:12.5px;color:#000;font-weight:normal;">Sel: 0 | 0</div>
<div class="a" style="left:1316px;top:840px;width:2px;height:2px;background:#b8ad98"></div>
<div class="a" style="left:1316px;top:843px;width:2px;height:2px;background:#b8ad98"></div>
<div class="a" style="left:1316px;top:846px;width:2px;height:2px;background:#b8ad98"></div>
<div class="a" style="left:1316px;top:849px;width:2px;height:2px;background:#b8ad98"></div>
<div class="a" style="left:1316px;top:852px;width:2px;height:2px;background:#b8ad98"></div>
<div class="a" style="left:1316px;top:855px;width:2px;height:2px;background:#b8ad98"></div>
<div class="a" style="left:1599px;top:75px;width:1px;height:785px;background:#d8d8d8"></div>
<div class="a" style="left:0px;top:860px;width:1600px;height:40px;background:#000"></div>
<svg class="a" style="left:16px;top:872px;" width="17" height="17" viewBox="0 0 17 17"><path d="M0 2.5L7 1.5V8H0ZM8 1.3L16 0V8H8ZM0 9H7V15.5L0 14.5ZM8 9H16V17L8 15.8Z" fill="#fff"/></svg>
<svg class="a" style="left:63px;top:872px;" width="18" height="18" viewBox="0 0 18 18"><circle cx="10.5" cy="7" r="5.5" fill="none" stroke="#fff" stroke-width="1.4"/><path d="M6.5 11L1 16.5" stroke="#fff" stroke-width="1.5"/></svg>
<svg class="a" style="left:111px;top:872px;" width="17" height="16" viewBox="0 0 17 16"><path d="M1 1H10M1 15H10M2 4H9V12H2Z" fill="none" stroke="#fff" stroke-width="1.3"/><path d="M13 1V4M13 6V10M13 12V15" stroke="#fff" stroke-width="1.3"/></svg>
<svg class="a" style="left:159px;top:867px;" width="25" height="25" viewBox="0 0 25 25"><defs><linearGradient id="ieg" x1="0" y1="0" x2="0" y2="1"><stop offset="0" stop-color="#8fe0ff"/><stop offset="1" stop-color="#1a9ae8"/></linearGradient></defs><path d="M4.5 13.5H19.5C19.8 8.5 16.5 5 12 5C7.5 5 4 8.5 4 13C4 17.5 7.5 21 12 21C15.5 21 18 19.2 19 16.5H14.8C14 17.7 13.2 18 12 18C9.8 18 8.3 16.3 8.2 14.8ZM8.4 11C8.8 9.2 10.2 8.2 12 8.2C13.8 8.2 15.2 9.2 15.6 11Z" fill="url(#ieg)"/><path d="M2.5 21.5C0 19 5 8 15 4C20.5 1.8 24 2.5 22.5 6" fill="none" stroke="#f3c000" stroke-width="1.6"/></svg>
<svg class="a" style="left:208px;top:867px;" width="24" height="24" viewBox="0 0 24 24"><path d="M1 5H9L11 7H23V22H1Z" fill="#f6d06a"/><path d="M1 8H23V22H1Z" fill="#fbe39a"/><path d="M7 22V15H17V22H14V18H10V22Z" fill="#2a9be8"/></svg>
<svg class="a" style="left:257px;top:867px;" width="24" height="24" viewBox="0 0 24 24"><circle cx="12" cy="12" r="11" fill="#fff" stroke="#3fb0ac" stroke-width="2"/><path d="M5.5 13C5.5 8 8.5 5 12.5 5.2C15 5.3 17 6.5 18 8.5" fill="none" stroke="#2a2a2a" stroke-width="1"/><ellipse cx="16.8" cy="9.3" rx="1.8" ry="1.3" fill="#2a2a2a"/><path d="M7.5 21.5L9.5 15C10.5 13 12.5 12 14 12.5L15.5 12L17 15L15.5 17L16.5 21Z" fill="#2f2a28"/><path d="M14.5 12.8L15 14.8L16 14.5" fill="none" stroke="#fff" stroke-width=".7"/></svg>
<div class="a" style="left:294px;top:860px;width:48px;height:40px;background:#333"></div>
<div class="a" style="left:294px;top:898px;width:48px;height:2px;background:#76b9ed"></div>
<svg class="a" style="left:306px;top:867px;" width="24" height="24" viewBox="0 0 24 24"><circle cx="12" cy="12" r="11" fill="#fff" stroke="#3fb0ac" stroke-width="2"/><path d="M5.5 13C5.5 8 8.5 5 12.5 5.2C15 5.3 17 6.5 18 8.5" fill="none" stroke="#2a2a2a" stroke-width="1"/><ellipse cx="16.8" cy="9.3" rx="1.8" ry="1.3" fill="#2a2a2a"/><path d="M7.5 21.5L9.5 15C10.5 13 12.5 12 14 12.5L15.5 12L17 15L15.5 17L16.5 21Z" fill="#2f2a28"/><path d="M14.5 12.8L15 14.8L16 14.5" fill="none" stroke="#fff" stroke-width=".7"/></svg>
<svg class="a" style="left:1346px;top:873px;" width="14" height="9" viewBox="0 0 14 9"><path d="M1 8L7 2L13 8" fill="none" stroke="#fff" stroke-width="1.3"/></svg>
<svg class="a" style="left:1372px;top:872px;" width="14" height="18" viewBox="0 0 14 18"><rect x="2" y="0.8" width="5" height="3.5" fill="none" stroke="#fff"/><rect x="0.8" y="4.3" width="7.5" height="12" fill="none" stroke="#fff"/><path d="M8 14L10 16L13.5 12" fill="none" stroke="#ccc"/></svg>
<svg class="a" style="left:1393px;top:873px;" width="18" height="15" viewBox="0 0 18 15"><rect x="3.5" y="0.8" width="13.5" height="9.5" fill="none" stroke="#fff"/><path d="M10 10.5V13M6 13.5H14M2 4V13" stroke="#fff"/><rect x="0.8" y="1" width="3" height="3" fill="none" stroke="#fff"/></svg>
<svg class="a" style="left:1417px;top:873px;" width="17" height="15" viewBox="0 0 17 15"><path d="M1 5H4L8 1V14L4 10H1Z" fill="none" stroke="#fff" stroke-width="1.1"/><path d="M10.5 4.5C11.5 6 11.5 9 10.5 10.5M12.5 3C14 5 14 10 12.5 12M14.5 1.5C16.5 4 16.5 11 14.5 13.5" fill="none" stroke="#fff" stroke-width="1.1"/></svg>
<div class="a t" style="left:1443px;top:873.84px;font-size:12px;color:#fff;font-weight:normal;">ENG</div>
<div class="a t" style="left:1498px;top:865.84px;font-size:12px;color:#fff;font-weight:normal;">0:23</div>
<div class="a t" style="left:1478px;top:883.84px;font-size:12px;color:#fff;font-weight:normal;;letter-spacing:0.549px">2025/10/23</div>
<svg class="a" style="left:1559px;top:872px;" width="17" height="17" viewBox="0 0 17 17"><path d="M0.8 0.8H15.2V12H10L8 14.5L6 12H0.8Z" fill="none" stroke="#fff" stroke-width="1.2"/></svg>
<div class="a" style="left:1595px;top:860px;width:1px;height:40px;background:#444"></div>
<svg class="a" style="left:0;top:0;pointer-events:none" width="1600" height="860" viewBox="0 0 1600 860"><g font-family="Liberation Sans" font-size="19" fill="#000" fill-opacity="0.1"><text x="85.0" y="221.0" transform="rotate(-45 85.0 221.0)" textLength="192" lengthAdjust="spacingAndGlyphs">audit审计01(Audit1)</text><text x="98.3" y="240.7" transform="rotate(-45 98.3 240.7)" textLength="197" lengthAdjust="spacingAndGlyphs">audit-172.18.210.237</text><text x="385.0" y="221.0" transform="rotate(-45 385.0 221.0)" textLength="192" lengthAdjust="spacingAndGlyphs">audit审计01(Audit1)</text><text x="398.3" y="240.7" transform="rotate(-45 398.3 240.7)" textLength="197" lengthAdjust="spacingAndGlyphs">audit-172.18.210.237</text><text x="685.0" y="221.0" transform="rotate(-45 685.0 221.0)" textLength="192" lengthAdjust="spacingAndGlyphs">audit审计01(Audit1)</text><text x="698.3" y="240.7" transform="rotate(-45 698.3 240.7)" textLength="197" lengthAdjust="spacingAndGlyphs">audit-172.18.210.237</text><text x="985.0" y="221.0" transform="rotate(-45 985.0 221.0)" textLength="192" lengthAdjust="spacingAndGlyphs">audit审计01(Audit1)</text><text x="998.3" y="240.7" transform="rotate(-45 998.3 240.7)" textLength="197" lengthAdjust="spacingAndGlyphs">audit-172.18.210.237</text><text x="1285.0" y="221.0" transform="rotate(-45 1285.0 221.0)" textLength="192" lengthAdjust="spacingAndGlyphs">audit审计01(Audit1)</text><text x="1298.3" y="240.7" transform="rotate(-45 1298.3 240.7)" textLength="197" lengthAdjust="spacingAndGlyphs">audit-172.18.210.237</text><text x="1585.0" y="221.0" transform="rotate(-45 1585.0 221.0)" textLength="192" lengthAdjust="spacingAndGlyphs">audit审计01(Audit1)</text><text x="1598.3" y="240.7" transform="rotate(-45 1598.3 240.7)" textLength="197" lengthAdjust="spacingAndGlyphs">audit-172.18.210.237</text><text x="85.0" y="521.0" transform="rotate(-45 85.0 521.0)" textLength="192" lengthAdjust="spacingAndGlyphs">audit审计01(Audit1)</text><text x="98.3" y="540.7" transform="rotate(-45 98.3 540.7)" textLength="197" lengthAdjust="spacingAndGlyphs">audit-172.18.210.237</text><text x="385.0" y="521.0" transform="rotate(-45 385.0 521.0)" textLength="192" lengthAdjust="spacingAndGlyphs">audit审计01(Audit1)</text><text x="398.3" y="540.7" transform="rotate(-45 398.3 540.7)" textLength="197" lengthAdjust="spacingAndGlyphs">audit-172.18.210.237</text><text x="685.0" y="521.0" transform="rotate(-45 685.0 521.0)" textLength="192" lengthAdjust="spacingAndGlyphs">audit审计01(Audit1)</text><text x="698.3" y="540.7" transform="rotate(-45 698.3 540.7)" textLength="197" lengthAdjust="spacingAndGlyphs">audit-172.18.210.237</text><text x="985.0" y="521.0" transform="rotate(-45 985.0 521.0)" textLength="192" lengthAdjust="spacingAndGlyphs">audit审计01(Audit1)</text><text x="998.3" y="540.7" transform="rotate(-45 998.3 540.7)" textLength="197" lengthAdjust="spacingAndGlyphs">audit-172.18.210.237</text><text x="1285.0" y="521.0" transform="rotate(-45 1285.0 521.0)" textLength="192" lengthAdjust="spacingAndGlyphs">audit审计01(Audit1)</text><text x="1298.3" y="540.7" transform="rotate(-45 1298.3 540.7)" textLength="197" lengthAdjust="spacingAndGlyphs">audit-172.18.210.237</text><text x="1585.0" y="521.0" transform="rotate(-45 1585.0 521.0)" textLength="192" lengthAdjust="spacingAndGlyphs">audit审计01(Audit1)</text><text x="1598.3" y="540.7" transform="rotate(-45 1598.3 540.7)" textLength="197" lengthAdjust="spacingAndGlyphs">audit-172.18.210.237</text><text x="85.0" y="821.0" transform="rotate(-45 85.0 821.0)" textLength="192" lengthAdjust="spacingAndGlyphs">audit审计01(Audit1)</text><text x="98.3" y="840.7" transform="rotate(-45 98.3 840.7)" textLength="197" lengthAdjust="spacingAndGlyphs">audit-172.18.210.237</text><text x="385.0" y="821.0" transform="rotate(-45 385.0 821.0)" textLength="192" lengthAdjust="spacingAndGlyphs">audit审计01(Audit1)</text><text x="398.3" y="840.7" transform="rotate(-45 398.3 840.7)" textLength="197" lengthAdjust="spacingAndGlyphs">audit-172.18.210.237</text><text x="685.0" y="821.0" transform="rotate(-45 685.0 821.0)" textLength="192" lengthAdjust="spacingAndGlyphs">audit审计01(Audit1)</text><text x="698.3" y="840.7" transform="rotate(-45 698.3 840.7)" textLength="197" lengthAdjust="spacingAndGlyphs">audit-172.18.210.237</text><text x="985.0" y="821.0" transform="rotate(-45 985.0 821.0)" textLength="192" lengthAdjust="spacingAndGlyphs">audit审计01(Audit1)</text><text x="998.3" y="840.7" transform="rotate(-45 998.3 840.7)" textLength="197" lengthAdjust="spacingAndGlyphs">audit-172.18.210.237</text><text x="1285.0" y="821.0" transform="rotate(-45 1285.0 821.0)" textLength="192" lengthAdjust="spacingAndGlyphs">audit审计01(Audit1)</text><text x="1298.3" y="840.7" transform="rotate(-45 1298.3 840.7)" textLength="197" lengthAdjust="spacingAndGlyphs">audit-172.18.210.237</text><text x="1585.0" y="821.0" transform="rotate(-45 1585.0 821.0)" textLength="192" lengthAdjust="spacingAndGlyphs">audit审计01(Audit1)</text><text x="1598.3" y="840.7" transform="rotate(-45 1598.3 840.7)" textLength="197" lengthAdjust="spacingAndGlyphs">audit-172.18.210.237</text></g></svg></body></html>
